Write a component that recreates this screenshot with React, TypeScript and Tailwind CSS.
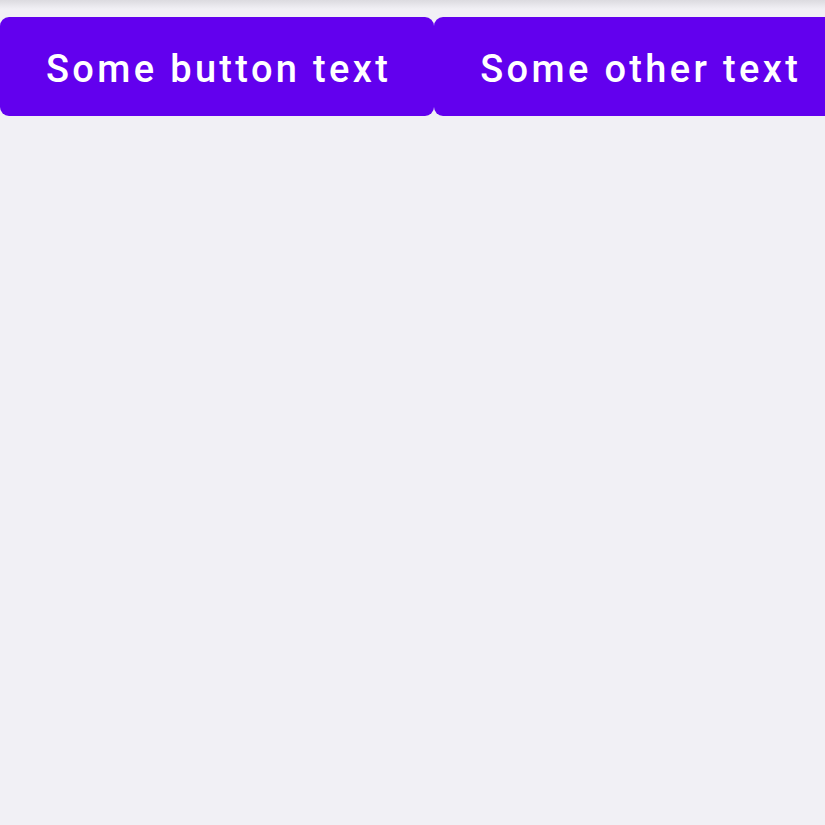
const buttons: string[] = ["Some button text", "Some other text"];

const App = () => {
  return (
    <div className="w-[825px] h-[825px] overflow-hidden bg-[#f1f0f5] font-['Roboto',sans-serif]">
      <div className="h-[9px] bg-gradient-to-b from-[#dcdbe0] to-[#f1f0f5]" />
      <div className="flex mt-[8px] gap-0">
        {buttons.map((label) => (
          <button
            key={label}
            type="button"
            className="shrink-0 h-[99px] pl-[46px] pr-[43px] pt-[6px] rounded-[9px] bg-[#6200ee] text-white text-[38px] font-medium tracking-[0.088em] whitespace-nowrap"
          >
            {label}
          </button>
        ))}
      </div>
    </div>
  );
};

export default App;
